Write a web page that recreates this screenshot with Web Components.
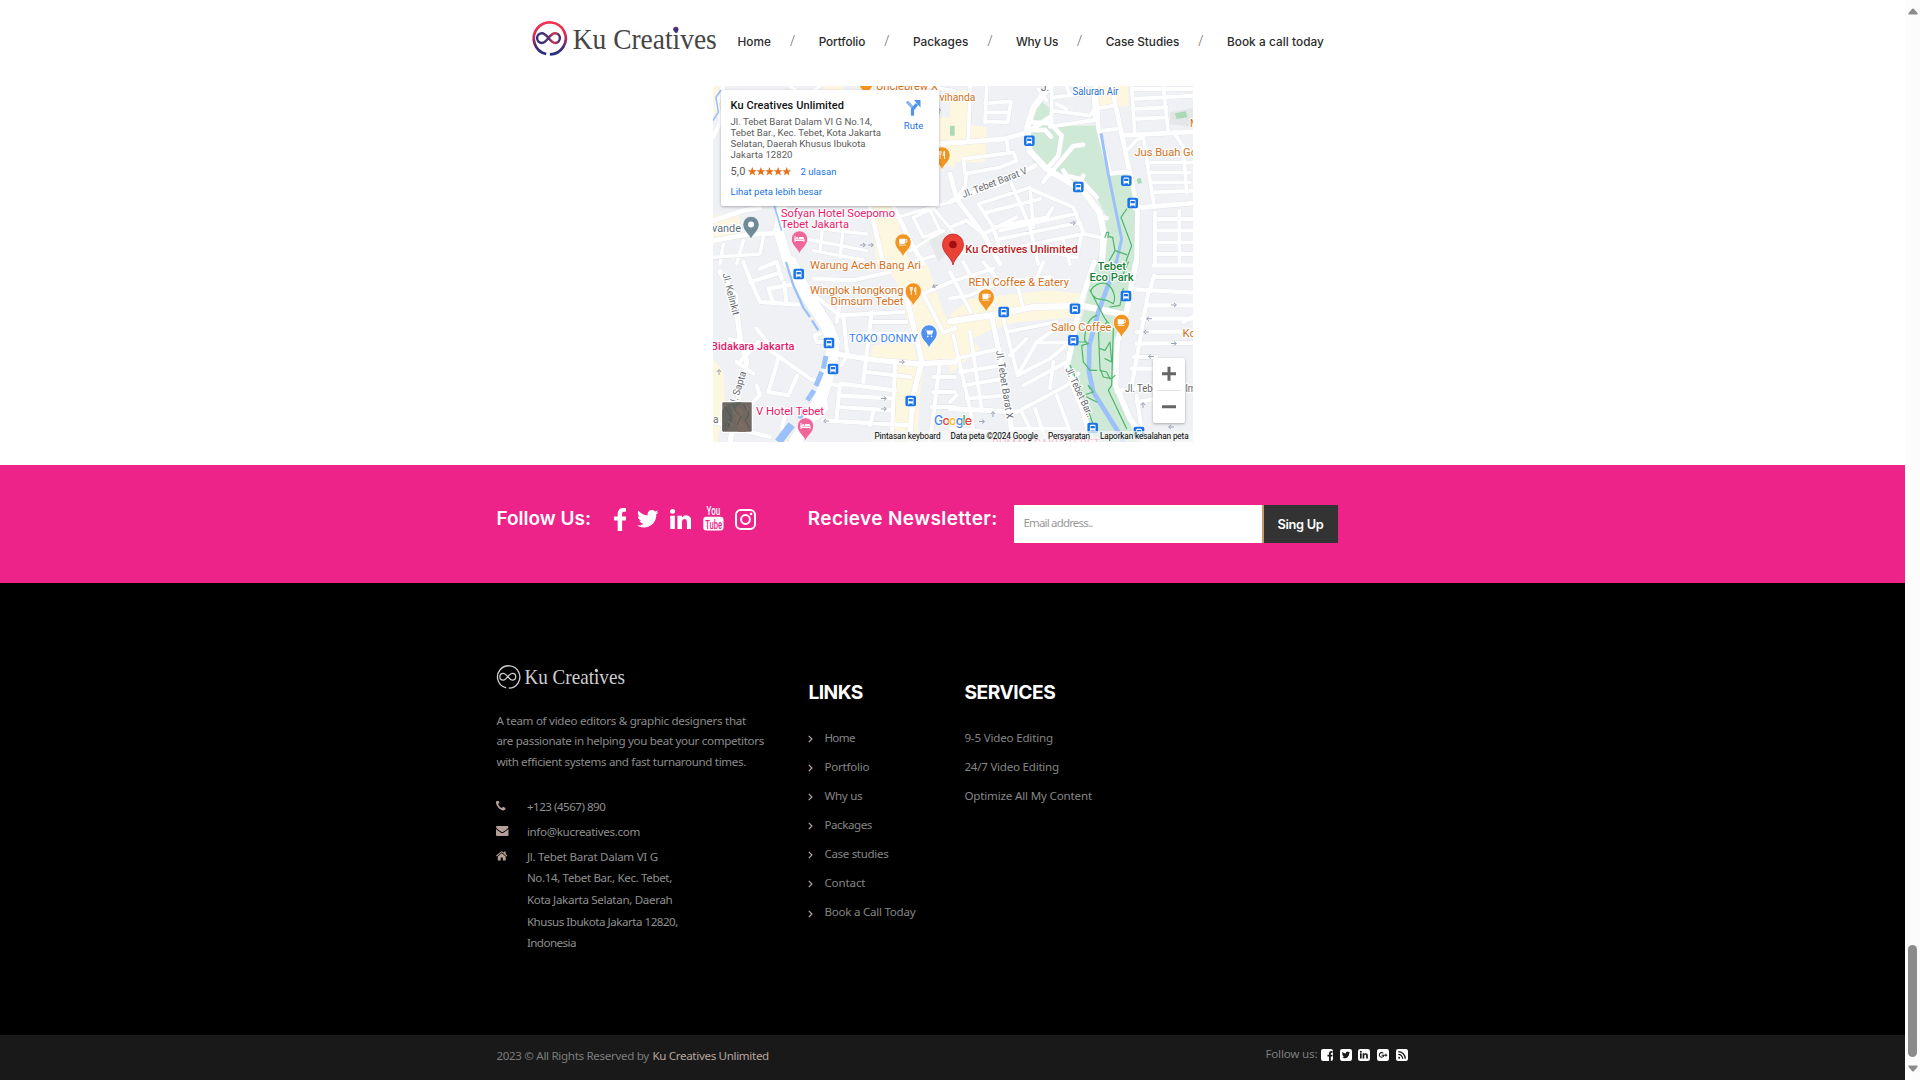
<!DOCTYPE html>
<html lang="en">
<head>
<meta charset="utf-8">
<title>Ku Creatives</title>
<style>
html,body{margin:0;height:100%;background:#fff;overflow:hidden}
</style>
</head>
<body>
<ku-page></ku-page>
<script>
const define=(name,html,extra)=>customElements.define(name,class extends HTMLElement{
  connectedCallback(){
    if(this.shadowRoot)return;
    const r=this.attachShadow({mode:'open'});
    r.innerHTML=typeof html==='function'?html(this):html;
    if(extra)extra(this,r);
  }
});

/* One line of text, tracked so that it fills the width given in "w". */
define('fit-text','<style>:host{display:block;white-space:nowrap}span{display:inline-block}</style><span><slot></slot></span>',(el,r)=>{
  const w=+el.getAttribute('w');
  el.style.width=w+'px';
  const n=el.textContent.length;
  const nat=r.querySelector('span').getBoundingClientRect().width;
  el.style.letterSpacing=((w-nat)/n).toFixed(3)+'px';
});

/* Icons */
const TW='M1684 408q-67 98-162 167 1 14 1 42 0 130-38 259.500t-115.500 248.500-184.500 210.500-258 146-323 54.500q-271 0-496-145 35 4 78 4 225 0 401-138-105-2-188-64.500t-114-159.500q33 5 61 5 43 0 85-11-112-23-185.500-111.500t-73.500-205.500v-4q68 38 146 41-66-44-105-115t-39-154q0-88 44-163 121 149 294.500 238.500t371.500 99.500q-8-38-8-74 0-134 94.500-228.500t228.500-94.500q140 0 236 102 109-21 205-78-37 115-142 178 93-10 186-50z';
const FB='M1343 12v264h-157q-86 0-116 36t-30 108v189h293l-39 296h-254v759h-306v-759h-255v-296h255v-218q0-186 104-288.500t277-102.500q147 0 228 12z';
const LI='M477 625v991h-330v-991h330zm21-306q1 73-50.500 122t-135.500 49h-2q-82 0-132-49t-50-122q0-74 51.500-122.500t134.500-48.500 133 48.500 51 122.500zm1166 729v568h-329v-530q0-105-40.500-164.500t-126.500-59.500q-63 0-105.500 34.500t-63.500 85.500q-11 30-11 81v553h-329q2-399 2-647t-1-296l-1-48h329v144h-2q20-32 41-56t56.500-52 87-43.500 114.500-15.500q171 0 275 113.500t104 332.500z';
const PH='M1600 1240q0 27-10 70.500t-21 68.500q-21 50-122 106-94 51-186 51-27 0-53-3.500t-57.500-12.500-47-14.500-55.500-20.500-49-18q-98-35-175-83-127-79-264-216t-216-264q-48-77-83-175-3-9-18-49t-20.500-55.500-14.500-47-12.500-57.500-3.500-53q0-92 51-186 56-101 106-122 25-11 68.500-21t70.500-10q14 0 21 3 18 6 53 76 11 19 30 54t35 63.500 31 53.500q3 4 17.500 25t21.500 35.500 7 28.500q0 20-28.500 50t-62 55-62 53-28.500 46q0 9 5 22.500t8.500 20.500 14 24 11.500 19q76 137 174 235t235 174q2 1 19 11.500t24 14 20.500 8.500 22.500 5q18 0 46-28.500t53-62 55-62 50-28.500q14 0 28.500 7t35.500 21.500 25 17.500q25 15 53.500 31t63.500 35 54 30q70 35 76 53 3 7 3 21z';
const sq=(inner)=>['0 0 12 12',12,12,'<rect width="12" height="12" rx="2.2" fill="#fff"/>'+inner];
const ICONS={
  fb:['479 0 864 1664',12.5,23,`<path d="${FB}"/>`],
  tw:['108 256 1576 1280',21.5,17.5,`<path d="${TW}"/>`],
  li:['128 148 1536 1468',21.5,20.5,`<path d="${LI}"/>`],
  yt:['0 0 21 25',21,25,`<text x="3.600" y="9.300" font-family="Roboto" font-weight="500" font-size="13" textLength="13.600" lengthAdjust="spacingAndGlyphs">You</text><rect x=".3" y="10.800" width="20.200" height="13.800" rx="3"/><text x="2.200" y="22.600" font-family="Roboto" font-weight="500" font-size="13" fill="#ee2389" textLength="16.800" lengthAdjust="spacingAndGlyphs">Tube</text>`],
  ig:['0 0 21 21',21,21,'<g fill="none" stroke="currentColor" stroke-width="2"><rect x="1" y="1" width="19" height="19" rx="4.8"/><circle cx="10.5" cy="10.500" r="4.4"/></g><circle cx="16.1" cy="5" r="1.3"/>'],
  phone:['192 256 1408 1280',9.5,9.5,`<path d="${PH}"/>`],
  mail:['0 0 12.500 10',12.5,10,'<path d="M1.100 0H11.400Q12.500 0 12.500 1.100Q12.500 2.300 10 4L7.300 5.800Q6.250 6.500 5.200 5.800L2.500 4Q0 2.300 0 1.100Q0 0 1.100 0ZM0 3Q2 4.600 4.700 6.400Q6.250 7.400 7.800 6.400Q10.500 4.600 12.500 3V8.900Q12.500 10 11.400 10H1.100Q0 10 0 8.900Z"/>'],
  home:['0 0 11.500 9.500',11.5,9.5,'<path d="M5.750 2.200L9.700 5.500V9Q9.700 9.500 9.200 9.500H6.800V6.500H4.700V9.500H2.300Q1.800 9.500 1.800 9V5.500ZM5.100.4Q5.750-.1 6.400.4L8 1.750V.5H9.600V3.100L11.400 4.600L10.700 5.400L5.750 1.300L.8 5.400L.1 4.600Z"/>'],
  chev:['0 0 5 8',5,8,'<path d="M.8.900L3.900 4L.8 7.100" fill="none" stroke="currentColor" stroke-width="1.300"/>'],
  sfb:sq(`<g fill="#191919" transform="translate(3.600 2.100) scale(.006)"><path d="${FB}"/></g>`),
  stw:sq(`<g fill="#191919" transform="translate(1.300 1.200) scale(.0052)"><path d="${TW}"/></g>`),
  sli:sq(`<g fill="#191919" transform="translate(1.200 1.100) scale(.0052)"><path d="${LI}"/></g>`),
  sgp:sq('<path d="M6.300 4.300A2.300 2.300 0 1 0 6.900 6.200H4.700M8.900 4.800V7.600M7.500 6.200H10.300" fill="none" stroke="#191919" stroke-width="1.100"/>'),
  srs:sq('<g fill="none" stroke="#191919" stroke-width="1.300"><path d="M2.300 5.300A4.400 4.400 0 0 1 6.700 9.700M2.300 2.700A7 7 0 0 1 9.300 9.700"/></g><circle cx="3.200" cy="8.800" r="1" fill="#191919"/>')
};
define('ku-icon',el=>{const i=ICONS[el.getAttribute('name')];
  return `<style>:host{display:block;flex:none}svg{display:block}</style><svg width="${i[1]}" height="${i[2]}" viewBox="${i[0]}" fill="currentColor" preserveAspectRatio="none">${i[3]}</svg>`});

/* Brand: ring with an infinity mark and the serif name */
define('ku-brand',el=>{
  const mono=el.hasAttribute('mono');
  const c=mono?'#cfcfcf':'url(#ring)', c2=mono?'#cfcfcf':'url(#inf)';
  return `<style>:host{display:block}svg{display:block;overflow:visible}</style>
<svg width="${mono?129:185}" height="${mono?26:37}" viewBox="0 0 185 37">
<defs><linearGradient id="ring" x1="0" y1="0" x2="0" y2="1"><stop offset="0" stop-color="#f43352"/><stop offset=".4" stop-color="#dc2c57"/><stop offset=".75" stop-color="#4a2c72"/><stop offset="1" stop-color="#24307f"/></linearGradient>
<linearGradient id="inf" x1="0" y1="0" x2="1" y2="0"><stop offset="0" stop-color="#2a2f7d"/><stop offset=".5" stop-color="#54306f"/><stop offset=".75" stop-color="#e03050"/><stop offset="1" stop-color="#33307a"/></linearGradient></defs>
<g transform="translate(${mono?-.3:-.7} 0)"><path d="M14.300 34.200A16 16 0 1 1 18 34.600" transform="translate(.6 -.2)" fill="none" stroke="${c}" stroke-width="${mono?1.900:2.700}"/>
<path d="M17.500 18.300C14.500 14.600 12.800 13.200 10.700 13.200A4.900 4.900 0 0 0 10.700 23C15.500 23 18.500 13.200 23.700 13.200A4.900 4.900 0 0 1 23.700 23C21.500 23 20 21.600 17.300 18.100" fill="none" stroke="${c2}" stroke-width="${mono?1.800:2.400}"/></g>
<text x="40.800" y="${mono?28.400:29}" font-family="Liberation Serif" font-size="28.800" fill="${mono?'#cfcfcf':'#454545'}" textLength="144" lengthAdjust="spacingAndGlyphs">Ku Creatives</text>
${mono?'<circle cx="143.900" cy="8.800" r="2.200" fill="#cfcfcf"/>':'<circle cx="143.900" cy="9.300" r="2.600" fill="#3f2f78"/><path d="M141.800 7.800a2.600 2.600 0 0 1 4 -.3z" fill="#e8304f"/>'}
</svg>`});

define('ku-header',()=>{
  const items=[['Home',33.5],['Portfolio',46.5],['Packages',55.5],['Why Us',42],['Case Studies',73.5],['Book a call today',97]];
  return `<style>:host{display:flex;height:86px;padding-left:532px;box-sizing:border-box;background:#fff}
ku-brand{margin-top:20px;width:185px}
nav{display:flex;margin:32px 0 0 20.500px;height:20px;font:500 11.800px/20px Inter,sans-serif;color:#2b2b2b}
i{font:300 14.500px/18px "Open Sans",sans-serif;color:#666;width:5px;margin:0 23.700px 0 19px;text-align:center}</style>
<ku-brand></ku-brand><nav>${items.map(a=>`<fit-text w="${a[1]}">${a[0]}</fit-text>`).join('<i>/</i>')}</nav>`});

/* Map tiles: four quadrants, each drawn at three times its size */
const Q=[
{o:[710,84],
 y:'M480 365H555L575 470L600 540H500ZM9 395L85 385L90 460L9 480ZM686 100H735V250L686 240ZM9 7H33V78L9 90ZM560 7H640V19H560ZM340 7H400V19H340Z',
 r:[[12,'M9 470L110 452L210 447M9 410L100 380L150 372M480 365L520 540M550 365L600 470L640 540M680 180L735 175M40 7L20 60L33 110L9 160'],
    [30,'M218 365L205 440L235 540'],
    [8,'M290 430L470 450M290 465L470 500M310 500L460 528M340 410L330 500M400 430L390 520M610 400L660 378L690 440L640 460L610 400M560 400L735 350M650 350L735 450M40 480L30 540M100 470L80 540M9 520L150 510L160 460M600 500L700 440M620 530L735 500M240 7L260 20M330 7L310 20M650 7L735 20']],
 w:[[5,'M9 110L25 85L18 40L33 18M193 365L215 440'] ]},
{o:[950,84],
 y:'M0 20H60V170H0ZM0 115L110 130L105 235H0ZM440 7H535V65L445 75Z',
 g:'M268 48L305 75V125L450 125L475 270L540 265L560 380L555 540H440L470 400L440 340L340 280L250 235L235 150L240 110Z',
 g2:'M0 125L14 125V155H0ZM675 88L708 82L712 100L680 105ZM560 285L572 282L576 297L564 300Z',
 s:'M660 85L735 70V130L660 120Z',
 r:[[18,'M298 7L250 72L232 130L238 200L290 255L400 320L448 385L462 450L455 540'],
    [12,'M0 178L160 165L232 145L300 100M485 7L515 150L540 270L563 370L560 540M515 155L735 143M555 372L735 357M0 270L20 345L100 450L150 540M437 7L445 130L480 268L540 262M255 245L150 300L15 345L0 355'],
    [9,'M60 7L55 175M110 10L105 115M105 58L183 52L173 115L105 112M108 85H176M305 7V120M310 40L430 25M305 80L420 95L435 75M320 60L350 75M300 128L435 108L430 25M435 75L490 65M350 7L360 35M400 7L405 30M455 140L500 135M265 15L290 50'],
    [9,'M545 7L555 155M545 15H735M550 45L735 35M550 75L650 70M550 105L650 100M640 7L655 145M535 195L560 168L580 160L612 365M590 235H735M595 265H720M600 295H720M605 325L735 320M675 150L700 190L710 325M615 385V540M615 405H735M620 440H735M620 475H735M620 510H735M688 380V540'],
    [11,'M240 115L300 118L335 155L325 215L290 255M400 182L370 186L280 293M245 138L285 138L303 158M340 260L350 275L390 285L440 340M400 275L392 290M455 400L470 402'],
    [9,'M40 225L190 205L200 230L150 250L50 268L45 305L20 345M40 225L45 270M170 170L175 205M85 360L235 312L370 370L402 450L455 462M85 360L130 430L150 500M130 430L290 400L308 372M110 385L270 345M150 440L380 388M150 465L390 415M100 450L200 400M185 300L240 430L265 540M200 490L400 450M280 500L380 520L395 450M340 470L360 540M0 430L50 410L100 450M240 312L250 430M20 520L60 490']],
 w:[[9,'M453 148L475 270L515 465L498 540']],
 p:'M530 375L513 400L545 485L525 540M465 460L470 445H476L474 460M478 458L488 460L495 500L478 530M495 500L530 512'},
{o:[710,262],
 y:'M530 20L600 0H650L700 150L735 200V315L640 305L610 240L560 60ZM555 310L640 315L630 400L622 540H540ZM9 290L40 330L45 420L22 540H9ZM490 250L610 240L625 300L480 285Z',
 r:[[38,'M240 0L285 90L350 190L370 240L362 310L335 400L300 470L255 540'],
    [14,'M372 275L500 295L620 305L735 300M585 90L625 250L635 300L610 400L598 540M30 30L75 100L90 230L110 300L90 380L60 540'],
    [10,'M640 95L700 212L735 198M650 90L735 55M100 0L120 50L150 120L265 128M120 60L200 35M175 80L265 65M175 80L190 122M222 62L230 125M200 0L215 50M150 20L200 0M310 50L430 55L540 30L530 0M300 90L390 160L580 150M400 160L412 280M485 150L460 360M490 180H590M470 215H590M390 120L380 180M412 280L395 310'],
    [10,'M390 365L555 385M390 365L380 470M385 400L550 410M385 435L545 445M340 475L600 490M470 330L600 345M60 230L95 240M140 200L180 250M90 300L145 240L300 350L390 372M205 290L175 390L235 400L262 340M80 300L130 335M10 480L80 500L180 525M140 370L150 400L60 490M230 440L215 500M320 240H350M320 240L315 220L330 215M345 410L350 440L320 470M690 300L660 540M670 345H735M670 390H735M665 435H735M555 310L545 540M490 450L480 490']],
 w:[[7,'M228 0L250 70L282 140L300 165M306 175L325 205'],[15,'M348 282L340 320M335 330L318 372M312 385L292 415M280 435L270 470'],[24,'M245 488L205 540']]},
{o:[950,262],
 y:'M0 160L60 110L300 85L400 95L385 165L200 180L120 205L0 265ZM0 250L60 225L90 260L0 335Z',
 g:'M435 0H555L532 150L490 235L492 360L560 540H430L400 440L355 310L400 150Z',
 r:[[18,'M0 178L120 160L250 135L400 132L520 158'],
    [14,'M432 0L390 130L350 320L400 450L425 540M558 0L530 150L502 240L497 370L540 470L590 540'],
    [10,'M555 82L735 92M612 40L600 90M610 10H735M620 45H735M590 130H735M575 170H735M560 210L735 208M560 245L735 243M550 285H620M545 320H620M595 90L560 290L545 370M500 388L620 370M560 420L620 410M560 400L580 540M700 180L735 160'],
    [13,'M125 165L145 260L175 440L190 540M0 440L200 450'],
    [9,'M160 170L203 340M200 450L350 370L385 335M203 340L260 240L330 190M170 210L320 180M180 280L230 230M203 340L300 290L372 230M220 370L350 300M260 242H370M215 450L260 540M320 400L372 540M255 440L290 540M300 380L310 300M190 500L350 500'],
    [9,'M0 30L62 150M40 0L72 60L130 130M0 60L130 20M0 110L60 100M100 0L150 60L60 100M200 60L220 140M150 60L300 45M10 220L60 440M60 210L95 440M20 290L150 260M30 330L155 310M40 370L165 350M50 410L170 400M60 440L70 500M0 500L120 510M20 400L0 420M280 0L260 50']],
 w:[[14,'M500 0L445 150L418 250L417 330L430 390L505 510L520 540']],
 p:'M440 68Q470 55 485 80Q500 105 490 125L470 115L440 110Q412 90 430 75ZM420 85L465 170L480 190M535 0L510 60M520 80L510 130L480 135M440 160Q410 170 405 220Q400 240 415 245L395 250L400 300L420 325H440M370 240H410M445 200L450 320L460 345L485 350L495 340M450 260L465 265L480 240L485 300L465 290M360 310L400 400L430 390L415 370L420 380M450 325L470 330L480 350M490 200L485 370L475 385L530 500M470 180L450 210M400 400L440 420M400 400L430 490'}
];
const quad=q=>{
  const t=`<g transform="translate(${q.o}) scale(.3333)">`;
  return {
    area:t+`<path d="${q.y||''}" fill="#fef7e0"/><path d="${q.s||''}" fill="#e4e6e8"/><path d="${q.g||''}" fill="#ceead6"/><path d="${q.g2||''}" fill="#a8dab5"/></g>`,
    edge:t+q.r.map(r=>`<path d="${r[1]}" stroke-width="${r[0]+(r[0]<15?4.5:3)}"/>`).join('')+'</g>',
    road:t+q.r.map(r=>`<path d="${r[1]}" stroke-width="${r[0]+(r[0]<15?2.5:1)}"/>`).join('')+'</g>',
    water:t+(q.w||[]).map(r=>`<path d="${r[1]}" stroke-width="${r[0]}"/>`).join('')+'</g>',
    path:t+`<path d="${q.p||''}"/></g>`};
};
const bus=(x,y)=>`<g transform="translate(${x-5.3} ${y-5.2})"><rect width="10.600" height="10.400" rx="1.800" fill="#1a73e8"/><rect x="2.500" y="2" width="5.600" height="5.800" rx="1" fill="#fff"/><rect x="3.200" y="3.200" width="4.200" height="2.300" fill="#1a73e8"/><path d="M3 7.500v1.200M7.600 7.500v1.200" stroke="#fff" stroke-width="1.100"/></g>`;
const G={
  cup:'<path d="M-3.800-3.200H2.400V.8Q2.400 2-1 2T-3.800.8ZM-4 2.700H3.200V3.500H-4Z" fill="#fff"/><path d="M2.400-2.400H4V0H2.400" fill="none" stroke="#fff" stroke-width=".8"/>',
  fork:'<path d="M-3-4V-1.500Q-3-.5-2-.5V4M-2-4V-.5M-1-4V-1.500Q-1-.5-2-.5M2.500 4V-4Q1-3 1.200.5H2.500" fill="none" stroke="#fff" stroke-width=".9"/>',
  bed:'<path d="M-4.500-3V3M-4.500 1.500H4.500V3M-4.500 1V0H4.500V1.500" fill="none" stroke="#fff" stroke-width="1"/><path d="M-.5-2H3.500Q4.500-2 4.500 0H-.5Z" fill="#fff"/><circle cx="-2.300" cy="-1" r="1.100" fill="#fff"/>',
  cart:'<path d="M-4.500-3.500H-3L-1.500 1.500H3L4.500-2.500H-2.500Z" fill="#fff"/><circle cx="-1.200" cy="3.300" r=".9" fill="#fff"/><circle cx="2.600" cy="3.300" r=".9" fill="#fff"/>',
  dot:'<circle r="3" fill="#fff"/>'};
const pin=(x,y,c,g)=>`<g transform="translate(${x} ${y-1})"><path d="M0 15.800C-1 9.500-8.200 7.200-8.200 0A8.200 8.200 0 0 1 8.200 0C8.200 7.200 1 9.500 0 15.800Z" fill="${c}" stroke="#fff" stroke-width=".8"/>${G[g]}</g>`;
const lab=(x,x2,y,s,c,fs=11.3,w=400)=>`<text x="${x}" y="${y}" fill="${c}" font-size="${fs}" font-weight="${w}" textLength="${x2-x}" lengthAdjust="spacingAndGlyphs">${s}</text>`;
const OR='#d3701a',PK='#e8196b';
define('ku-map',()=>{
  const q=Q.map(quad), j=k=>q.map(a=>a[k]).join('');
  const arrows=[[863,245,0],[871,245,0],[1073,223,0],[902,362,0],[884,398.500,0],[884,409,0],[826,421,180],[935,286,160],[1174,305,0],[1149,318.700,180],[1146,332,180],[1174,343.500,0],[1151,356.500,180],[982,421.500,0],[993,414,-90],[1143,405,-90],[1171,427,180],[719,372,-90],[939,111,-90]];
  return `<style>:host{display:block;position:relative;width:480px;height:356px;overflow:hidden;background:#f1f3f4}svg{display:block}
map-card{position:absolute;left:8px;top:4px}
map-zoom{position:absolute;right:8px;top:272px}
map-terms{position:absolute;right:0;bottom:0}</style>
<svg width="480" height="356" viewBox="713 86 480 356" font-family="Roboto,sans-serif">
<rect x="713" y="86" width="480" height="356" fill="#eff1f4"/>
${j('area')}
<g fill="none" stroke-linejoin="round" stroke-linecap="round"><g stroke="#dde0e6">${j('edge')}</g><g stroke="#fff">${j('road')}</g><g stroke="#9cc0f9" stroke-linecap="butt">${j('water')}</g><g stroke="#4db56c" stroke-width="3.600">${j('path')}</g></g>
<path d="M929 240L945 233L954 247L938 262Z" fill="#e6e8ea"/>
${arrows.map(a=>`<path transform="translate(${a[0]} ${a[1]}) rotate(${a[2]})" d="M-3 0H2M0-2L2.500 0L0 2" fill="none" stroke="#9aa3b8" stroke-width="1"/>`).join('')}
${[[1029.300,140.700],[1078.300,187],[1126.300,180.700],[1132.700,203],[798.700,274],[829,343],[833,369],[910.700,401],[1003.700,312],[1075,308.700],[1126,296],[1073.300,340.300],[1092.700,428],[1139,432]].map(a=>bus(...a)).join('')}
${pin(866,82,'#f29422','dot')}${pin(942,156,'#f29422','fork')}${pin(751,225.500,'#708b98','dot')}${pin(799.500,240,'#f0659a','bed')}${pin(903,243,'#f29422','cup')}${pin(913.300,292,'#f29422','fork')}${pin(929,334,'#4f8ff0','cart')}${pin(986.200,298,'#f29422','cup')}${pin(1121.500,323.500,'#f29422','cup')}${pin(805.500,427,'#f0659a','bed')}
<path d="M953 265C952 258 942.500 253 942.500 244.500A10.500 10.500 0 0 1 963.500 244.500C963.500 253 954 258 953 265Z" fill="#ea4335" stroke="#c5221f" stroke-width=".8"/><circle cx="953" cy="244.500" r="3.800" fill="#a50e0e"/>
<g stroke="#fff" stroke-width="2.400" stroke-linejoin="round" paint-order="stroke">
${lab(876,938,89.500,'Unclebrew X',OR)}${lab(937,975.500,100.500,'ivihanda',OR)}
${lab(1072.500,1118.500,95,'Saluran Air','#2a6fce',10)}${lab(1134.500,1197,155.500,'Jus Buah Go',OR)}${lab(1190,1199,127,'M',OR)}
${lab(965.300,1077.700,253,'Ku Creatives Unlimited','#b8201c',11,500)}
${lab(712,741,231.500,'vande','#5a6f7c')}
${lab(781,895,216.700,'Sofyan Hotel Soepomo',PK)}${lab(781,849,227.700,'Tebet Jakarta',PK)}
${lab(810,921,269.300,'Warung Aceh Bang Ari',OR)}${lab(810,903.500,294.300,'Winglok Hongkong',OR)}${lab(830.500,903.500,305.300,'Dimsum Tebet',OR)}
${lab(849,918,342.300,'TOKO DONNY','#3d82ea')}${lab(711,794.500,349.500,'Bidakara Jakarta',PK,11,500)}${lab(756,824,415,'V Hotel Tebet',PK)}
${lab(968.500,1069,286.300,'REN Coffee &amp; Eatery',OR)}${lab(1051,1111.500,331,'Sallo Coffee',OR)}${lab(1182.500,1196,336.500,'Ko',OR)}
${lab(1097.500,1126,270,'Tebet','#188038',11,500)}${lab(1089.500,1133.500,281,'Eco Park','#188038',11,500)}
${lab(1125,1196,391.500,'Jl. Tebet Bar Dlm','#666',10)}
<g fill="#666a70" font-size="10"><text transform="translate(963.500 198) rotate(-21)" textLength="69" lengthAdjust="spacingAndGlyphs">Jl. Tebet Barat V</text>
<text transform="translate(722.500 274) rotate(76)" textLength="43" lengthAdjust="spacingAndGlyphs">Jl. Kelinkit</text>
<text transform="translate(737 403) rotate(-73)" textLength="32" lengthAdjust="spacingAndGlyphs">l. Sapta</text>
<text transform="translate(996 351) rotate(81)" textLength="69" lengthAdjust="spacingAndGlyphs">Jl. Tebet Barat X</text>
<text transform="translate(1065 369) rotate(65)" textLength="54" lengthAdjust="spacingAndGlyphs">Jl. Tebet Bar..</text>
<text x="713" y="423">a</text></g>
${lab(992,1100,447,'RUMAH SAKIT TEBET',PK)}
<text x="934" y="425" font-family="Inter" font-size="12.500" font-weight="500" textLength="38" stroke-width="1.800"><tspan fill="#4285f4">G</tspan><tspan fill="#ea4335">o</tspan><tspan fill="#fbbc04">o</tspan><tspan fill="#4285f4">g</tspan><tspan fill="#34a853">l</tspan><tspan fill="#ea4335">e</tspan></text>
</g>
<text x="1041" y="91" font-size="10" fill="#666">J.</text>
<g><rect x="721" y="401" width="32" height="32" rx="2.500" fill="#fff"/><rect x="722.300" y="402.300" width="29.400" height="29.400" rx="1" fill="#706862"/><path d="M722.300 410L730 404L737 402.300H742L732 412L733 420L726 431H722.300Z" fill="#5f625d"/><path d="M737 406L743 411L741 419L748 423L746 431.700H738L735 418Z" fill="#7b6a62"/><path d="M725 407L731 417L728 428M743 404L749 414L745 421L750 428M734 409L741 417L737 425" stroke="#525a50" fill="none"/><path d="M731 406L735 414M740 423L744 427M748 406L747 411M728 421L732 425" stroke="#8b7168" fill="none"/></g>
</svg>
<map-card></map-card><map-zoom></map-zoom><map-terms></map-terms>`});

define('map-card',()=>`<style>:host{display:flex;justify-content:space-between;width:218px;height:116px;box-sizing:border-box;padding:8px 14.500px 0 9.500px;background:#fff;border-radius:2px;box-shadow:0 1px 3px rgba(0,0,0,.3);font:9.600px/11px Roboto,sans-serif;color:#5b5b5b}
.t{font:500 11px/16px Roboto,sans-serif;color:#111}.a{margin-top:1.500px}.r{display:flex;align-items:center;margin-top:6.500px;font-size:11px}.r svg{margin:0 10px 0 2px}.b{color:#1a73e8;font-size:9.600px}.l{margin-top:9px}
.d{width:22px;display:flex;flex-direction:column;align-items:center;color:#1a73e8}.d svg{margin:1px 0 4px}</style>
<div><fit-text class="t" w="113.500">Ku Creatives Unlimited</fit-text>
<div class="a"><fit-text w="141.500">Jl. Tebet Barat Dalam VI G No.14,</fit-text><fit-text w="150.500">Tebet Bar., Kec. Tebet, Kota Jakarta</fit-text><fit-text w="135">Selatan, Daerah Khusus Ibukota</fit-text><fit-text w="62">Jakarta 12820</fit-text></div>
<div class="r"><fit-text w="15">5,0</fit-text><svg width="43" height="9" viewBox="0 0 43 9" fill="#e7711b">${[0,1,2,3,4].map(i=>`<path transform="translate(${4.3+i*8.6} 4.600)" d="M0-4.500L1.200-1.400L4.400-1.300L1.900.7L2.800 3.900L0 2L-2.800 3.900L-1.900.7L-4.400-1.300L-1.200-1.400Z"/>`).join('')}</svg><fit-text class="b" w="36">2 ulasan</fit-text></div>
<fit-text class="b l" w="91.500">Lihat peta lebih besar</fit-text></div>
<div class="d"><svg width="15" height="17" viewBox="0 0 15 17"><path d="M1 2.500L6.500 8.500V16.500" fill="none" stroke="#8ab4f0" stroke-width="3"/><path d="M6.500 16.500V10.500L11 5" fill="none" stroke="#4f94ea" stroke-width="3.200"/><path d="M8 1H14.500V8.500Z" fill="#4f94ea"/></svg><fit-text w="19.500">Rute</fit-text></div>`);
define('map-zoom',`<style>:host{display:flex;flex-direction:column;align-items:center;width:32px;height:65px;background:#fff;border-radius:2px;box-shadow:0 1px 3px rgba(0,0,0,.3)}svg{display:block}</style><svg width="32" height="65" viewBox="0 0 32 65"><path d="M9 15.700H23M16 8.700V22.700M9 48.700H23" stroke="#666" stroke-width="3"/><path d="M4 32.500H28" stroke="#e3e3e3"/></svg>`);
define('map-terms',`<style>:host{display:flex;gap:10px;height:11px;padding:0 4.500px 0 4px;background:rgba(245,245,245,.75);font:8.200px/11px Roboto,sans-serif;color:#000}</style><fit-text w="66">Pintasan keyboard</fit-text><fit-text w="87.500">Data peta ©2024 Google</fit-text><fit-text w="42">Persyaratan</fit-text><fit-text w="88.500">Laporkan kesalahan peta</fit-text>`);

define('ku-newsletter',`<style>:host{display:flex;height:118px;box-sizing:border-box;padding:40px 0 0 496.500px;background:#ee2389;color:#fff}
.h{font:600 19px/26px Inter,sans-serif;margin-top:.5px}
.s{display:flex;align-items:center;height:26px;margin:1px 0 0 22.500px;gap:11.200px}
.s :nth-child(4){margin-top:-2px}
.n{margin-left:52px}.f{display:flex;margin-left:16.200px;height:38px}
.i{width:248px;box-sizing:border-box;padding-left:9.500px;background:#fff;color:#999;font:11.500px/36px "Noto Sans",sans-serif}
.b{width:76px;box-sizing:border-box;border-left:2px solid #c09a72;background:#333;padding-left:13.500px;font:600 12.800px/40px Inter,sans-serif}</style>
<fit-text class="h" w="94.500">Follow Us:</fit-text>
<div class="s"><ku-icon name="fb"></ku-icon><ku-icon name="tw"></ku-icon><ku-icon name="li"></ku-icon><ku-icon name="yt"></ku-icon><ku-icon name="ig"></ku-icon></div>
<fit-text class="h n" w="190">Recieve Newsletter:</fit-text>
<div class="f"><div class="i"><fit-text w="69">Email address..</fit-text></div><div class="b"><fit-text w="46">Sing Up</fit-text></div></div>`);

const T=(a,w,c='')=>`<fit-text ${c} w="${w}">${a}</fit-text>`;
define('ku-contact',el=>`<style>:host{display:flex;align-items:flex-start;color:#8f8f8f}.i{width:30.500px;color:#b59f99;padding-top:5.500px}.t{line-height:21.600px}</style><div class="i"><ku-icon name="${el.getAttribute('icon')}"></ku-icon></div><div class="t"><slot></slot></div>`);
define('ku-footer',()=>{
  const links=[['Home',30.5],['Portfolio',45],['Why us',38],['Packages',47.5],['Case studies',64],['Contact',41],['Book a Call Today',91]];
  const sv=[['9-5 Video Editing',88.5],['24/7 Video Editing',94.5],['Optimize All My Content',127.5]];
  return `<style>:host{display:flex;height:452px;box-sizing:border-box;padding-left:496.400px;background:#000;color:#8c8c8c;font:11.600px/20.700px "Noto Sans",sans-serif}
.c1{width:312px}.c2{width:156px}ku-brand{margin:80.500px 0 0 0}
.p{margin-top:21px}.k{margin-top:23px;display:flex;flex-direction:column;gap:3.500px}
.h{font:700 19.200px/28px Inter,sans-serif;color:#fff;margin:95px 0 17.400px}
.l{display:flex;align-items:center;height:29.100px;gap:11px;color:#858585}.l ku-icon{color:#b59f99;margin-top:2px}</style>
<div class="c1"><ku-brand mono></ku-brand>
<div class="p">${T('A team of video editors &amp; graphic designers that',249.5)}${T('are passionate in helping you beat your competitors',267.5)}${T('with efficient systems and fast turnaround times.',249.5)}</div>
<div class="k"><ku-contact icon="phone">${T('+123 (4567) 890',78.5)}</ku-contact><ku-contact icon="mail">${T('info@kucreatives.com',113)}</ku-contact>
<ku-contact icon="home">${T('Jl. Tebet Barat Dalam VI G',131)}${T('No.14, Tebet Bar., Kec. Tebet,',145)}${T('Kota Jakarta Selatan, Daerah',145.5)}${T('Khusus Ibukota Jakarta 12820,',151)}${T('Indonesia',49)}</ku-contact></div></div>
<div class="c2">${T('LINKS',54.5,'class="h"')}${links.map(a=>`<div class="l"><ku-icon name="chev"></ku-icon>${T(...a)}</div>`).join('')}</div>
<div>${T('SERVICES',91,'class="h"')}${sv.map(a=>`<div class="l">${T(...a)}</div>`).join('')}</div>`});

define('ku-copyright',`<style>:host{display:flex;height:45px;box-sizing:border-box;padding:11px 0 0 496.400px;background:#191919;color:#7d7d7d;font:11.600px/20px "Noto Sans",sans-serif}
.n{color:#b8a59f;margin-left:3.500px}.f{margin:-2px 0 0 496.500px}.s{display:flex;gap:6.750px;margin:3px 0 0 3.500px}</style>
<fit-text w="152.500">2023 © All Rights Reserved by</fit-text><fit-text class="n" w="116.500">Ku Creatives Unlimited</fit-text><fit-text class="f" w="52">Follow us:</fit-text>
<div class="s"><ku-icon name="sfb"></ku-icon><ku-icon name="stw"></ku-icon><ku-icon name="sli"></ku-icon><ku-icon name="sgp"></ku-icon><ku-icon name="srs"></ku-icon></div>`);

define('ku-scrollbar',`<style>:host{display:flex;flex-direction:column;align-items:center;width:15px;height:1080px;background:#fcfcfc}.t{width:9px;height:112px;border-radius:4.500px;background:#8b8b8b;margin:930px 0 8px}svg{display:block}.u{margin-top:8px}</style>
<svg class="u" width="10" height="7" viewBox="0 0 10 7"><path d="M.5 6.500Q0 5.500 1 4.500L4 1Q5 0 6 1L9 4.500Q10 5.500 9.500 6.500Z" fill="#8b8b8b"/></svg><div class="t"></div><svg width="10" height="7" viewBox="0 0 10 7"><path d="M.5.500Q0 1.500 1 2.500L4 6Q5 7 6 6L9 2.500Q10 1.500 9.500.5Z" fill="#8b8b8b"/></svg>`);

define('ku-page',`<style>:host{display:flex;width:1920px;height:1080px;overflow:hidden}main{width:1905px;display:flex;flex-direction:column}ku-map{margin:0 0 23px 713px}</style>
<main><ku-header></ku-header><ku-map></ku-map><ku-newsletter></ku-newsletter><ku-footer></ku-footer><ku-copyright></ku-copyright></main><ku-scrollbar></ku-scrollbar>`);
</script>
</body>
</html>
